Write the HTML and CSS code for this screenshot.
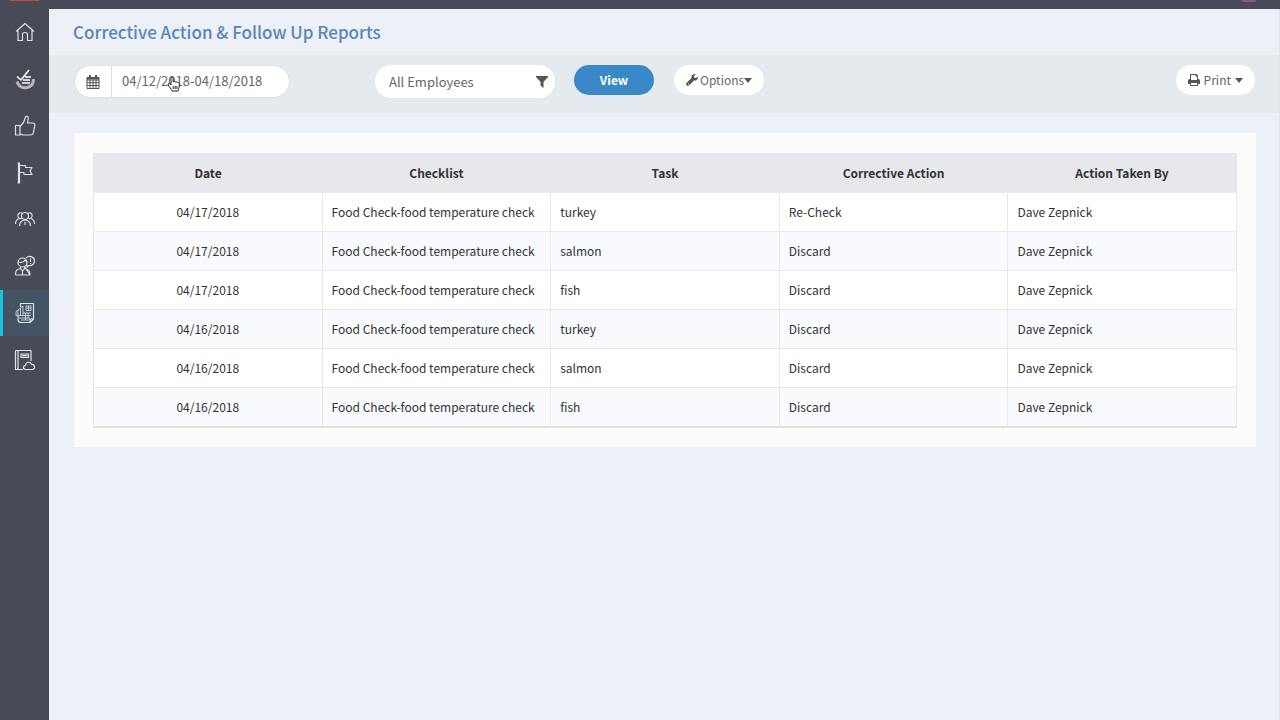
FILE: index.html
```html
<!DOCTYPE html>
<html lang="en">
<head>
<meta charset="utf-8">
<title>Corrective Action &amp; Follow Up Reports</title>
<link rel="stylesheet" href="styles.css">
</head>
<body>
<div class="topbar"><span class="brand"></span><span class="account"><span class="avatar"></span></span></div>
<div class="shell">
  <nav class="sidebar" aria-label="Main">
    <div class="nav-list">
    <a class="nav-item" href="#" aria-label="Home"><svg viewBox="0 0 22 22"><path d="M2 10.500 11 2.500l9 8M4 9v10.500h4.500V13q0-1.500 2.500-1.500t2.500 1.500v6.500H18V9"/></svg></a>
    <a class="nav-item" href="#" aria-label="Checklists"><svg viewBox="0 0 22 22"><path class="thick" d="M3 13.500C4.500 18 8 20.500 13 19.500c4-.8 6.500-4 6.500-8.500"/><path class="mid" d="M3 8.500 7 12 15 2M11 9h6M9 12h7M8 15h8"/></svg></a>
    <a class="nav-item" href="#" aria-label="Approvals"><svg viewBox="0 0 22 22"><path d="M1.500 10.500h4.500v9.500H1.500zM6 11.500l3.500-4 2-5.500c.5-1.500 3-.8 2.800 1.500L13.500 8h5c1.800 0 2.600 1.200 2.300 2.700l-1.400 7c-.4 1.500-1.200 2.300-2.700 2.300H9l-3-1.200"/></svg></a>
    <a class="nav-item" href="#" aria-label="Flags"><svg viewBox="0 0 22 22"><path d="M4.500 1v20M3.500 1h2v20h-2M5.500 3.500h6v2h6.500l-2 3.500 2 3.500h-8v-2H5.500"/></svg></a>
    <a class="nav-item" href="#" aria-label="Teams"><svg viewBox="0 0 22 22"><circle cx="11" cy="8" r="3.500"/><path d="M5.500 18c0-4 1.500-5.500 5.500-6 4 .5 5.500 2 5.500 6M11 14v3M7.500 10.500C4 11 3 8 4.500 5.700 5.500 4.500 7 4.500 8 5.500M1.500 16c0-3.500 1-4.500 3.500-5.500M14.500 10.500c3.500.5 4.500-2.500 3-4.800-1-1.200-2.500-1.200-3.500-.2M20.500 16c0-3.500-1-4.500-3.500-5.500"/></svg></a>
    <a class="nav-item" href="#" aria-label="Employees"><svg viewBox="0 0 22 22"><circle cx="8.500" cy="7.500" r="4.500"/><path d="M4 7c3 1 6 0 7-2l2 2M1.500 20c0-4.500 1-5.500 5-6.500V11.500M10.500 11.500v2c4 1 5.500 2 5.500 6.500zM1.500 20H16M6.500 13.500l2 2.500 2-2.500M8.500 16v4M12 3c3-3 8-1.500 8.500 2.500.3 3.500-2.500 5.500-6 5L13 12v-2M16.500 3.500V7M16.500 8v1"/></svg></a>
    <a class="nav-item active" href="#" aria-label="Reports" aria-current="page"><svg viewBox="0 0 22 22"><path d="M6.500 5V1.500h13V17l-3.500 3.500H7c-2 0-3-1-3-3V14M19.500 17H16v3.500"/><path class="fine" d="M2 9.500 4 8v5.500H2zM4 8l2.500-2v7.500H4M6.500 6 9 4v9.500H6.500M12 4h5v4.500h-5zM14.500 4v4.500M12 6.200h5M9 11h8M9 13.500h8M5 16h11M7 18h8M11.500 11v7M14 11v5"/></svg></a>
    <a class="nav-item" href="#" aria-label="Cloud documents"><svg viewBox="0 0 22 22"><path d="M1.500 1.500H17V12M9 20.500H1.500v-19M4 1.500v19M7 5h7.500v3.500H7zM8 6.700h5.500M11.500 20.500c-3-.5-2.500-4 0-4.200.3-3.500 5-4.300 6-1 3.500-.3 4.300 4.700 1 5.200z"/></svg></a>
    </div>
  </nav>
  <main class="main">
    <h1 class="title">Corrective Action &amp; Follow Up Reports</h1>
    <form class="toolbar">
      <div class="date-group">
        <label class="date-icon" for="range" aria-label="Date range"><svg viewBox="0 0 14 14"><path class="line" d="M1 2.500h12v11H1zM1 5h12M1 7.700h12M1 10.500h12M4 5v8.500M7 5v8.500M10 5v8.500"/><path d="M1 2h12v2.500H1zM3 0h2v3H3zM9 0h2v3H9z"/></svg></label>
        <input class="date-input" id="range" type="text" value="04/12/2018-04/18/2018">
        <svg class="pointer" viewBox="0 0 14 16"><path d="M4 9V2.500C4 .7 6.200.7 6.200 2.500V6c.3-1.200 2-1 2.100.2.500-.9 1.900-.6 2 .5.600-.8 2-.3 2 .9V10c0 2-1 2.700-1.200 5H5C4.700 13 2.500 11.500 1.200 9 .5 7.600 2 7 2.800 7.900zM6.200 10v3M8.200 10v3M10 10v3"/></svg>
      </div>
      <div class="employee">
        <select class="employee-select" aria-label="Employees"><option>All Employees</option></select>
        <svg class="funnel" viewBox="0 0 12 12"><path d="M0 0h12v1L7.500 6v6L4.500 9.500V6L0 1z"/></svg>
      </div>
      <button class="btn primary" type="button">View</button>
      <button class="btn" type="button"><svg class="wrench" viewBox="0 0 12 12"><path d="M11.700 2.700 9.800 4 8 3.500V2l2-1.500C7.500-.5 5 1.200 5.500 4L.5 9c-1.300 1.500.9 3.700 2.500 2.500l5-5c2.500.5 4.500-1.500 3.700-3.800zM2 9.500h1v1H2z"/></svg>Options<span class="caret"></span></button>
      <button class="btn print" type="button"><svg class="printer" viewBox="0 0 12 12"><path fill-rule="evenodd" d="M2 0h6.500L10 1.500V5h.5Q12 5 12 6.500V10h-2v2H2v-2H0V6.500Q0 5 1.500 5H2zm1 1v5h6V2.500H7.500V1zm0 8v2h6V9z"/></svg>Print<span class="caret"></span></button>
    </form>
    <section class="panel">
      <table class="report">
        <thead><tr><th>Date</th><th>Checklist</th><th>Task</th><th>Corrective Action</th><th>Action Taken By</th></tr></thead>
        <tbody>
          <tr><td>04/17/2018</td><td>Food Check-food temperature check</td><td>turkey</td><td>Re-Check</td><td>Dave Zepnick</td></tr>
          <tr><td>04/17/2018</td><td>Food Check-food temperature check</td><td>salmon</td><td>Discard</td><td>Dave Zepnick</td></tr>
          <tr><td>04/17/2018</td><td>Food Check-food temperature check</td><td>fish</td><td>Discard</td><td>Dave Zepnick</td></tr>
          <tr><td>04/16/2018</td><td>Food Check-food temperature check</td><td>turkey</td><td>Discard</td><td>Dave Zepnick</td></tr>
          <tr><td>04/16/2018</td><td>Food Check-food temperature check</td><td>salmon</td><td>Discard</td><td>Dave Zepnick</td></tr>
          <tr><td>04/16/2018</td><td>Food Check-food temperature check</td><td>fish</td><td>Discard</td><td>Dave Zepnick</td></tr>
        </tbody>
      </table>
    </section>
  </main>
</div>
</body>
</html>
```
FILE: styles.css
```css
* { box-sizing: border-box; }
body {
  margin: 0;
  min-height: 100vh;
  display: flex;
  flex-direction: column;
  background: #edf0f6;
  color: #333;
  font: 12px/20px "Noto Sans CJK SC", "Noto Sans", sans-serif;
}
button, input, select { font: inherit; color: inherit; }
.topbar {
  height: 9px;
  padding: 0 24px 0 10px;
  display: flex;
  justify-content: space-between;
  background: #484b55;
}
.brand { width: 29px; height: 1px; background: #b5503f; }
.account { width: 41px; padding-left: 26px; border-left: 1px solid #434b59; }
.avatar { display: block; width: 14px; height: 2px; border-radius: 0 0 7px 7px; background: #80608a; }
.shell { flex: 1; display: flex; }
.sidebar { width: 49px; flex: none; background: #484b55; }
.nav-list { height: 374px; display: flex; flex-direction: column; }
.nav-item {
  flex: 1;
  display: flex;
  align-items: center;
  padding-left: 14px;
}
.nav-item.active { background: #435464; box-shadow: inset 3px 0 #1fc0df; }
.nav-item svg {
  width: 22px;
  height: 22px;
  fill: none;
  stroke: #dfe2e7;
  stroke-width: 1.2;
  stroke-linejoin: round;
}
.nav-item .fine { stroke-width: 0.8; }
.nav-item .thick { stroke-width: 3; stroke: #b4b6ba; }
.nav-item .mid { stroke-width: 1.6; stroke: #fff; }
.main { flex: 1; min-width: 0; border-right: 1px solid #dfe3ea; }
.title {
  margin: 0;
  padding: 11px 24px;
  font-size: 17px;
  line-height: 24px;
  font-weight: 500;
  color: #5687b9;
}
.toolbar {
  display: flex;
  align-items: flex-start;
  padding: 10px 24px 15px 25px;
  background: #e5eaee;
}
.date-group, .employee {
  position: relative;
  display: flex;
  height: 33px;
  border-radius: 17px;
  background: #fff;
  color: #666;
  font-size: 13px;
}
.date-group { width: 216px; border: 1px solid #dcdfe3; margin-right: 85px; }
.date-icon {
  width: 37px;
  flex: none;
  display: flex;
  align-items: center;
  justify-content: center;
  border-right: 1px solid #ddd;
}
.date-icon svg { width: 14px; height: 14px; fill: #555; }
.date-icon .line { fill: none; stroke: #555; }
.date-input { flex: 1; min-width: 0; padding: 0 10px 2px; border: 0; border-radius: 17px; background: transparent; }
.pointer { position: absolute; left: 92px; top: 10px; width: 14px; height: 16px; fill: #fff; stroke: #222; }
.employee { width: 180px; margin-right: 19px; }
.employee-select { width: 100%; padding: 0 14px; border: 0; border-radius: 17px; background: transparent; appearance: none; }
.funnel { position: absolute; right: 7px; top: 11px; width: 12px; height: 12px; fill: #555; pointer-events: none; }
.btn {
  height: 30px;
  min-width: 78px;
  padding: 0 12px;
  display: flex;
  align-items: center;
  justify-content: center;
  border: 0;
  border-radius: 15px;
  background: #fff;
  color: #666;
  font-size: 12px;
  white-space: nowrap;
}
.btn svg { width: 12px; height: 12px; fill: #555; }
.btn.primary { width: 80px; margin-right: 20px; background: #3989c9; color: #fff; font-weight: 700; }
.wrench { margin-right: 2px; }
.caret { border: 4px solid transparent; border-top: 5px solid #555; border-bottom: 0; }
.btn.print { margin-left: auto; gap: 4px; }
.panel { margin: 20px 23px 20px 25px; padding: 20px 19px 19px; background: #fbfbfb; }
.report {
  width: 100%;
  table-layout: fixed;
  border-collapse: collapse;
  background: #fff;
  border: 1px solid #e4e6ea;
  border-bottom: 2px solid #dfe2e5;
}
.report th { padding: 9px; background: #e7e8eb; font-weight: 700; text-align: center; }
.report td { padding: 9px; border: 1px solid #e7e9ed; white-space: nowrap; }
.report td:first-child { text-align: center; }
.report tbody tr:nth-child(even) { background: #f8fafe; }
```
